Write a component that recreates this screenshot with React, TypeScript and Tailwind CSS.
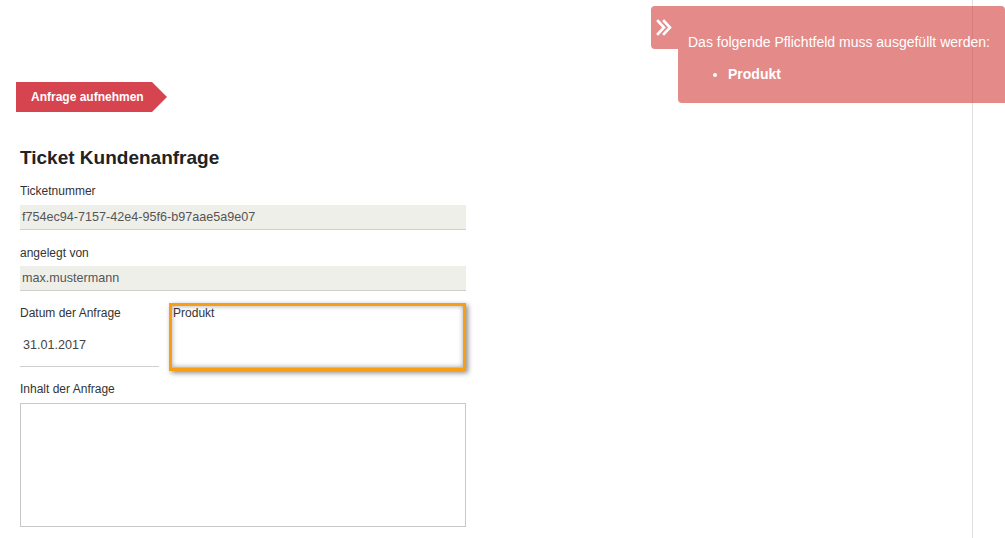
import React from 'react';

const Label = ({ children }: { children: React.ReactNode }) => (
  <div className="text-[12px] leading-[16px] text-[#333]">{children}</div>
);

const ReadonlyField = ({ value }: { value: string }) => (
  <div className="h-[25px] bg-[#efefea] border-b border-[#cfcfcf] pl-[2px] text-[12.6px] leading-[24px] text-[#555]">
    {value}
  </div>
);

const App = () => {
  return (
    <div className="relative min-h-screen bg-white font-['Liberation_Sans',Arial,sans-serif] overflow-hidden">
      <div className="w-[973px] min-h-[538px] border-r border-[#dedede] pt-[82px]">
        {/* Action button */}
        <div className="ml-[16px] w-[151px] h-[30px] bg-[#d6444f] [clip-path:polygon(0_0,136px_0,151px_50%,136px_100%,0_100%)] pl-[15px] text-[12px] font-bold leading-[30px] text-white">
          Anfrage aufnehmen
        </div>

        {/* Form */}
        <div className="ml-[20px] w-[446px]">
          <h2 className="mt-[35px] text-[19px] leading-[22px] font-bold text-[#222]">Ticket Kundenanfrage</h2>

          <div className="mt-[14px]">
            <Label>Ticketnummer</Label>
          </div>
          <div className="mt-[6px]">
            <ReadonlyField value="f754ec94-7157-42e4-95f6-b97aae5a9e07" />
          </div>

          <div className="mt-[15px]">
            <Label>angelegt von</Label>
          </div>
          <div className="mt-[5px]">
            <ReadonlyField value="max.mustermann" />
          </div>

          <div className="mt-[12px] flex items-start gap-[10px]">
            <div className="w-[140px] pt-[2px] pb-[13px] border-b border-[#cfcfcf]">
              <Label>Datum der Anfrage</Label>
              <div className="mt-[16px] pl-[3px] text-[12.6px] leading-[16px] text-[#444]">31.01.2017</div>
            </div>
            <div className="w-[299px] h-[68px] border-[3px] border-[#f99d12] shadow-[2px_2px_5px_rgba(0,0,0,0.45)] bg-white">
              <div className="h-full shadow-[inset_0_0_5px_rgba(0,0,0,0.35)] border-b border-[#bdbdbd] pl-[1px]">
                <div className="text-[12px] leading-[14px] text-[#333]">Produkt</div>
              </div>
            </div>
          </div>

          <div className="mt-[10px]">
            <Label>Inhalt der Anfrage</Label>
          </div>
          <div className="mt-[6px] h-[124px] border border-[#c8c8c8] bg-white" />
        </div>
      </div>

      {/* Validation toast */}
      <div className="absolute top-[6px] left-[651px] flex text-white">
        <div className="w-[27px] h-[43px] rounded-l-[4px] bg-[rgba(210,60,58,0.6)] flex items-start pt-[13px] pl-[4px]">
          <svg width="18" height="18" viewBox="0 0 18 18" fill="none" stroke="white" strokeWidth="2.6" strokeLinecap="square">
            <polyline points="3,2 9,8.5 3,15" />
            <polyline points="9,2 15,8.5 9,15" />
          </svg>
        </div>
        <div className="w-[327px] h-[97px] rounded-bl-[4px] rounded-tr-[4px] bg-[rgba(210,60,58,0.6)] pl-[10px] pt-[28px]">
          <div className="text-[14px] leading-[16px] whitespace-nowrap">Das folgende Pflichtfeld muss ausgefüllt werden:</div>
          <ul className="mt-[16px] pl-[40px] list-disc text-[14px] leading-[16px] font-bold">
            <li>Produkt</li>
          </ul>
        </div>
      </div>
    </div>
  );
};

export default App;
